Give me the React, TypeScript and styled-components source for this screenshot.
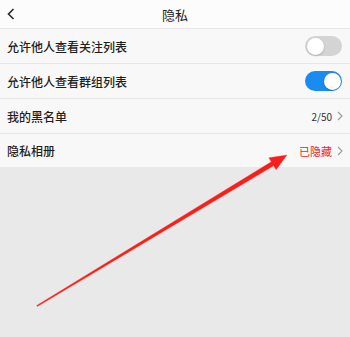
import React, { useState } from 'react';
import styled, { createGlobalStyle } from 'styled-components';

const GlobalStyle = createGlobalStyle`
  html, body {
    margin: 0;
    padding: 0;
    background: #e9e9e9;
  }
  * {
    box-sizing: border-box;
  }
`;

const Page = styled.div`
  position: relative;
  display: flex;
  flex-direction: column;
  min-height: 100vh;
  background-color: #e9e9e9;
  font-family: 'Noto Sans CJK SC', 'Noto Sans', sans-serif;
  color: #222;
`;

const Header = styled.div`
  display: grid;
  grid-template-columns: 40px 1fr 40px;
  align-items: center;
  height: 29px;
  background-color: #fcfcfc;
  border-bottom: 1px solid #e8e8e8;
`;

const BackButton = styled.div`
  display: flex;
  align-items: center;
  padding-left: 7px;
  color: #333;
`;

const Title = styled.div`
  text-align: center;
  font-size: 13px;
  color: #222;
`;

const List = styled.div`
  display: flex;
  flex-direction: column;
  background-color: #f8f8f8;
`;

const Row = styled.div<{ $last?: boolean }>`
  display: flex;
  align-items: center;
  justify-content: space-between;
  height: ${(p) => (p.$last ? '33px' : '35px')};
  padding: 0 7px 0 7px;
  border-bottom: ${(p) => (p.$last ? 'none' : '1px solid #e6e6e6')};
`;

const Label = styled.span`
  font-size: 12px;
  font-weight: 500;
  color: #1e1e1e;
`;

const Extra = styled.div`
  display: flex;
  align-items: center;
  gap: 5px;
`;

const Value = styled.span<{ $red?: boolean }>`
  font-size: ${(p) => (p.$red ? '11px' : '10px')};
  color: ${(p) => (p.$red ? '#f2221e' : '#333')};
`;

const Switch = styled.div<{ $on: boolean }>`
  position: relative;
  width: 37px;
  height: 20px;
  border-radius: 10px;
  margin-right: 1px;
  background-color: ${(p) => (p.$on ? '#1a8bf0' : '#d4d4d4')};
  cursor: pointer;

  &::after {
    content: '';
    position: absolute;
    top: 1.5px;
    left: ${(p) => (p.$on ? '18.5px' : '1.5px')};
    width: 17px;
    height: 17px;
    border-radius: 50%;
    background: #fff;
    box-shadow: 0 1px 2px rgba(0, 0, 0, 0.2);
  }
`;

const Arrow = styled.svg`
  position: absolute;
  left: 0;
  top: 0;
  width: 350px;
  height: 337px;
  pointer-events: none;
`;

const Chevron = () => (
  <svg width="6" height="10" viewBox="0 0 6 10">
    <path d="M1 1 L5 5 L1 9" fill="none" stroke="#9a9a9a" strokeWidth="1.1" />
  </svg>
);

// tail (37,306) -> tip (287,155)
const ux = 0.856;
const uy = -0.517;
const nx = 0.517;
const ny = 0.856;
const tip = [287, 155];
const base = [tip[0] - 17 * ux, tip[1] - 17 * uy];
const tail = [37, 306];
const pts = [
  [tail[0] + 0.6 * nx, tail[1] + 0.6 * ny],
  [base[0] + 2.3 * nx, base[1] + 2.3 * ny],
  [base[0] + 7 * nx, base[1] + 7 * ny],
  tip,
  [base[0] - 7 * nx, base[1] - 7 * ny],
  [base[0] - 2.3 * nx, base[1] - 2.3 * ny],
  [tail[0] - 0.6 * nx, tail[1] - 0.6 * ny],
]
  .map((p) => `${p[0].toFixed(1)},${p[1].toFixed(1)}`)
  .join(' ');

const App: React.FC = () => {
  const [followVisible, setFollowVisible] = useState<boolean>(false);
  const [groupVisible, setGroupVisible] = useState<boolean>(true);

  return (
    <Page>
      <GlobalStyle />
      <Header>
        <BackButton>
          <svg width="8" height="12" viewBox="0 0 8 12">
            <path d="M6.5 1 L1.5 6 L6.5 11" fill="none" stroke="#2a2a2a" strokeWidth="1.6" />
          </svg>
        </BackButton>
        <Title>隐私</Title>
        <div />
      </Header>

      <List>
        <Row>
          <Label>允许他人查看关注列表</Label>
          <Switch $on={followVisible} onClick={() => setFollowVisible(!followVisible)} />
        </Row>
        <Row>
          <Label>允许他人查看群组列表</Label>
          <Switch $on={groupVisible} onClick={() => setGroupVisible(!groupVisible)} />
        </Row>
        <Row>
          <Label>我的黑名单</Label>
          <Extra>
            <Value>2/50</Value>
            <Chevron />
          </Extra>
        </Row>
        <Row $last>
          <Label>隐私相册</Label>
          <Extra>
            <Value $red>已隐藏</Value>
            <Chevron />
          </Extra>
        </Row>
      </List>

      <Arrow viewBox="0 0 350 337">
        <polygon points={pts} fill="#f5201c" stroke="#ff3b30" strokeWidth="0.4" strokeLinejoin="round" />
      </Arrow>
    </Page>
  );
};

export default App;
